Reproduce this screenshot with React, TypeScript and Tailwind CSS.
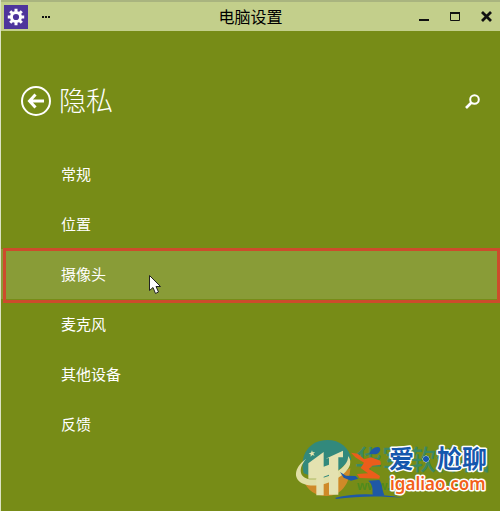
import { useState } from "react";

const items = ["常规", "位置", "摄像头", "麦克风", "其他设备", "反馈"];

function GearIcon() {
  return (
    <svg width="18" height="18" viewBox="0 0 18 18" fill="none" stroke="#fff">
      <circle cx="9" cy="9" r="4.6" strokeWidth="3" />
      <g strokeWidth="3">
        <path d="M9 .8v3M9 14.2v3M.8 9h3M14.2 9h3M3.2 3.2l2.1 2.1M12.7 12.7l2.1 2.1M3.2 14.8l2.1-2.1M12.7 5.3l2.1-2.1" />
      </g>
    </svg>
  );
}

function Watermark() {
  return (
    <svg
      className="pointer-events-none absolute right-0 bottom-0"
      width="220"
      height="81"
      viewBox="0 0 220 81"
      fill="none"
    >
      {/* 旧水印 */}
      <g opacity=".75">
        <text x="75" y="40" fontSize="27" fontWeight="500" fill="#29877b" fontFamily='"Noto Sans CJK SC", sans-serif'>
          华军软件园
        </text>
        <text x="77" y="60" fontSize="13" fontWeight="700" fill="#438b20" fontFamily='"Liberation Sans", sans-serif'>
          www.onlinedown.net
        </text>
      </g>

      <g transform="translate(9 4) scale(.3333)">
        {/* 圆形标志 */}
        <path d="M44 118C30 62 62 18 115 18c38 0 65 22 72 58L110 142Z" fill="#32897c" />
        <path d="M44 140c40 12 98-6 140-38-2 50-30 84-70 84-34 0-60-18-70-46Z" fill="#cf8a28" />
        <path d="M52 74C12 102 12 138 45 150c50 18 128-22 138-58 2-12 0-20-6-26 4 34-62 72-110 70-36-2-42-32-15-62Z" fill="#e1dfa6" />
        <path d="M58 88l46-34v44l16-6V72l-10 2 52-24v20h-14v112h-28v-60l-16 6v56H82v-50H58Z" fill="#e4e2b0" />
        <path d="M69 49l2 6 7-1-5 5 4 6-7-2-5 5v-7l-6-3 7-2Z" fill="#e5e3ae" />

        {/* 奔跑的人 */}
        <path
          d="M186 56l20 3 20 17 20-6 28 10 2 12-26 3-10 10 33 21-2 8-59-2-8-12 33-2-22-16 10-16-26-16Z"
          fill="#ec5d1b"
        />
        <path d="M241 60c4-12 14-22 27-21 9 2 7 15-3 20-8 3-16 1-24 1Z" fill="#1f58a6" />
        <path d="M153 114l18 11 29 1 8 8-22 6-22-9Z" fill="#1f58a6" />
        <path d="M238 140l33-2c9 12 8 28 15 46l-34 2c-4-16 4-30-14-46Z" fill="#1f58a6" />
        <path d="M140 191c50-13 115-15 205 1-80-8-140-5-205 3Z" fill="#1f58a6" />
      </g>

      <g stroke="#fff" strokeWidth="3" strokeLinejoin="round" paintOrder="stroke">
        <text x="109" y="38" fontSize="25" fontWeight="700" fill="#1557ad" fontFamily='"Noto Sans CJK SC", sans-serif'>
          爱
        </text>
        <circle cx="146" cy="29" r="3" fill="#1557ad" strokeWidth="1" />
        <text x="157" y="38" fontSize="25" fontWeight="700" fill="#1557ad" fontFamily='"Noto Sans CJK SC", sans-serif'>
          尬聊
        </text>
        <text x="110" y="60" fontSize="17" fontWeight="600" fill="#f26018" fontFamily='"Noto Sans", sans-serif'>
          igaliao.com
        </text>
      </g>
    </svg>
  );
}

export default function App() {
  const [active, setActive] = useState("摄像头");

  return (
    <div className="relative min-h-screen overflow-hidden border-l border-[#dce3c4] bg-[#778c17] font-['Open_Sans','Noto_Sans_CJK_SC',sans-serif] text-white">
      <header className="grid h-[31px] grid-cols-3 items-center border-t-2 border-[#a9b47f] bg-[#c3cf8b] text-black">
        <div className="flex items-center gap-3 pl-[3px]">
          <div className="flex size-6 items-center justify-center bg-[#4e359c]">
            <GearIcon />
          </div>
          <button aria-label="更多" className="p-0.5">
            <svg width="9" height="2" fill="#111">
              <path d="M0 0h2v2H0zM3 0h2v2H3zM6 0h2v2H6z" />
            </svg>
          </button>
        </div>
        <h1 className="text-center text-base leading-6">电脑设置</h1>
        <div className="flex items-center justify-end gap-5 pr-2">
          <button aria-label="最小化">
            <svg width="11" height="11" fill="#111">
              <path d="M0 8h10v2H0z" />
            </svg>
          </button>
          <button aria-label="最大化">
            <svg width="11" height="11" fill="none" stroke="#111">
              <path d="M.5 2v7.5h9V2" />
              <path d="M0 2h10" strokeWidth="2" />
            </svg>
          </button>
          <button aria-label="关闭">
            <svg width="11" height="11" fill="none" stroke="#111" strokeWidth="2.8">
              <path d="M1 1l9 9M10 1l-9 9" />
            </svg>
          </button>
        </div>
      </header>

      <div className="flex items-center justify-between px-5 pt-[50px]">
        <div className="flex items-center gap-2">
          <button aria-label="返回">
            <svg width="30" height="30" fill="none" stroke="#fff">
              <circle cx="15" cy="15" r="14" strokeWidth="2" />
              <path d="M8.5 15H23M14.5 8.5L8.5 15l6 6.5" strokeWidth="3" />
            </svg>
          </button>
          <h2 className="text-[27px] leading-10 font-light">隐私</h2>
        </div>
        <button aria-label="搜索">
          <svg width="15" height="15" fill="none" stroke="#fff">
            <circle cx="9.5" cy="5.5" r="4.3" strokeWidth="2" />
            <path d="M6.5 8.5L1 14" strokeWidth="2.6" />
          </svg>
        </button>
      </div>

      <nav className="mt-7">
        {items.map((item) => (
          <button
            key={item}
            onClick={() => setActive(item)}
            className={`relative block h-[50px] w-full pl-[60px] text-left text-[15px] leading-5 ${
              active === item ? "bg-[#899c37]" : ""
            }`}
          >
            {item}
            {active === item && (
              <span className="absolute -top-px right-0 -bottom-1 left-0.5 border-3 border-[#cc4c2c]" />
            )}
          </button>
        ))}
      </nav>

      {/* 鼠标指针 */}
      <svg className="pointer-events-none absolute top-[274px] left-[147px]" width="14" height="21" viewBox="0 0 14 21">
        <path d="M1.5 1.5v15l3.5-3 2.5 6 3-1.5-2.5-5.5h4.5Z" fill="#fff" stroke="#222" />
      </svg>

      <Watermark />
    </div>
  );
}
